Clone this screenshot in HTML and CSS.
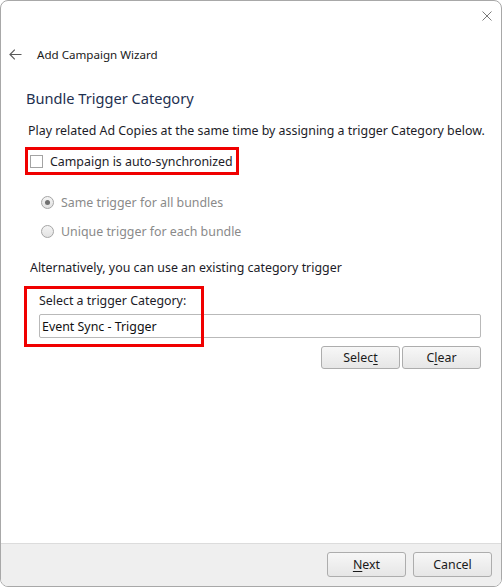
FILE: index.html
```html
<!DOCTYPE html>
<html lang="en">
<head>
    <meta charset="UTF-8">
    <title>Add Campaign Wizard</title>
    <link rel="stylesheet" href="styles.css">
</head>
<body>
    <div class="window">
        <div class="titlebar">
            <svg class="close" width="10" height="10" viewBox="0 0 10 10">
                <path d="M0.5 0.5 L9.5 9.5 M9.5 0.5 L0.5 9.5" stroke="#7a7a7a" stroke-width="1" fill="none"/>
            </svg>
        </div>
        <div class="nav">
            <svg class="back" width="13" height="11" viewBox="0 0 13 11">
                <path d="M12.5 5.5 H1 M5.8 0.7 L1 5.5 L5.8 10.3" stroke="#5a5a5a" stroke-width="1.2" fill="none"/>
            </svg>
            <span class="nav-title">Add Campaign Wizard</span>
        </div>

        <div class="content">
            <div class="heading">Bundle Trigger Category</div>
            <div class="intro">Play related Ad Copies at the same time by assigning a trigger Category below.</div>

            <label class="check-row">
                <span class="checkbox"></span>
                Campaign is auto-synchronized
            </label>

            <div class="radio-row first">
                <span class="radio checked"></span>
                Same trigger for all bundles
            </div>
            <div class="radio-row">
                <span class="radio"></span>
                Unique trigger for each bundle
            </div>

            <div class="alt">Alternatively, you can use an existing category trigger</div>

            <div class="field-label">Select a trigger Category:</div>
            <div class="field">Event Sync - Trigger</div>

            <div class="field-buttons">
                <button class="btn">Selec<u>t</u></button>
                <button class="btn">C<u>l</u>ear</button>
            </div>

            <div class="mark mark-check"></div>
            <div class="mark mark-field"></div>
        </div>

        <div class="footer">
            <button class="btn"><u>N</u>ext</button>
            <button class="btn">Cancel</button>
        </div>
    </div>
</body>
</html>
```

FILE: styles.css
```css
body {
    margin: 0;
    padding: 0;
    font-family: "Noto Sans", sans-serif;
    font-size: 12.4px;
    color: #1c1c28;
    background-color: #ffffff;
}

.window {
    width: 502px;
    height: 587px;
    box-sizing: border-box;
    border: 1px solid #a8a8a8;
    border-radius: 8px;
    overflow: hidden;
    display: flex;
    flex-direction: column;
    background-color: white;
}

.titlebar {
    height: 29px;
    display: flex;
    align-items: center;
    justify-content: flex-end;
    padding-right: 9px;
}

.nav {
    height: 48px;
    display: flex;
    align-items: center;
    padding-left: 8px;
}

.back {
    margin-right: 15px;
}

.nav-title {
    font-size: 11.6px;
    color: #1a1a1a;
}

.content {
    position: relative;
    padding: 0 20px 0 25px;
}

.heading {
    margin-top: 10px;
    line-height: 20px;
    font-size: 14.6px;
    color: #1e3050;
}

.intro {
    margin-top: 13px;
    line-height: 20px;
    padding-left: 2px;
    white-space: nowrap;
}

.check-row {
    margin-top: 10px;
    height: 21px;
    display: flex;
    align-items: center;
    padding-left: 4px;
}

.checkbox {
    width: 11px;
    height: 11px;
    border: 1px solid #a3a3a3;
    background-color: white;
    margin-right: 7px;
}

.radio-row {
    margin-top: 9px;
    height: 20px;
    display: flex;
    align-items: center;
    padding-left: 15px;
    color: #8a8a8a;
}

.radio-row.first {
    margin-top: 20px;
}

.radio {
    width: 11px;
    height: 11px;
    border: 1px solid #a5a5a5;
    border-radius: 50%;
    background: linear-gradient(#f4f4f4, #e2e2e2);
    margin-right: 7px;
    display: flex;
    align-items: center;
    justify-content: center;
}

.radio.checked::after {
    content: "";
    width: 5px;
    height: 5px;
    border-radius: 50%;
    background-color: #707070;
}

.alt {
    margin-top: 17px;
    line-height: 20px;
    padding-left: 4px;
}

.field-label {
    margin-top: 13px;
    line-height: 20px;
    padding-left: 13px;
}

.field {
    margin-top: 3px;
    margin-left: 13px;
    height: 24px;
    box-sizing: border-box;
    border: 1px solid #b9b9b9;
    border-radius: 2px;
    padding-left: 2px;
    line-height: 23px;
    color: #111111;
}

.field-buttons {
    margin-top: 8px;
    display: flex;
    justify-content: flex-end;
    gap: 2px;
}

.btn {
    width: 79px;
    height: 23px;
    padding: 0;
    border: 1px solid #adadad;
    border-radius: 3px;
    background: linear-gradient(#f7f7f7, #e6e6e6);
    font-family: "Noto Sans", sans-serif;
    font-size: 12.4px;
    color: #1a1a1a;
}

.btn u {
    text-underline-offset: 2px;
}

.mark {
    position: absolute;
    border: 3px solid #f00000;
}

.mark-check {
    left: 24px;
    top: 69px;
    width: 208px;
    height: 22px;
}

.mark-field {
    left: 23px;
    top: 208px;
    width: 174px;
    height: 55px;
}

.footer {
    margin-top: auto;
    height: 34px;
    border-top: 1px solid #dcdcdc;
    background-color: #efefef;
    display: flex;
    justify-content: flex-end;
    align-items: flex-start;
    gap: 7px;
    padding: 8px 9px 0 0;
}

.footer .btn {
    height: 25px;
}
```
